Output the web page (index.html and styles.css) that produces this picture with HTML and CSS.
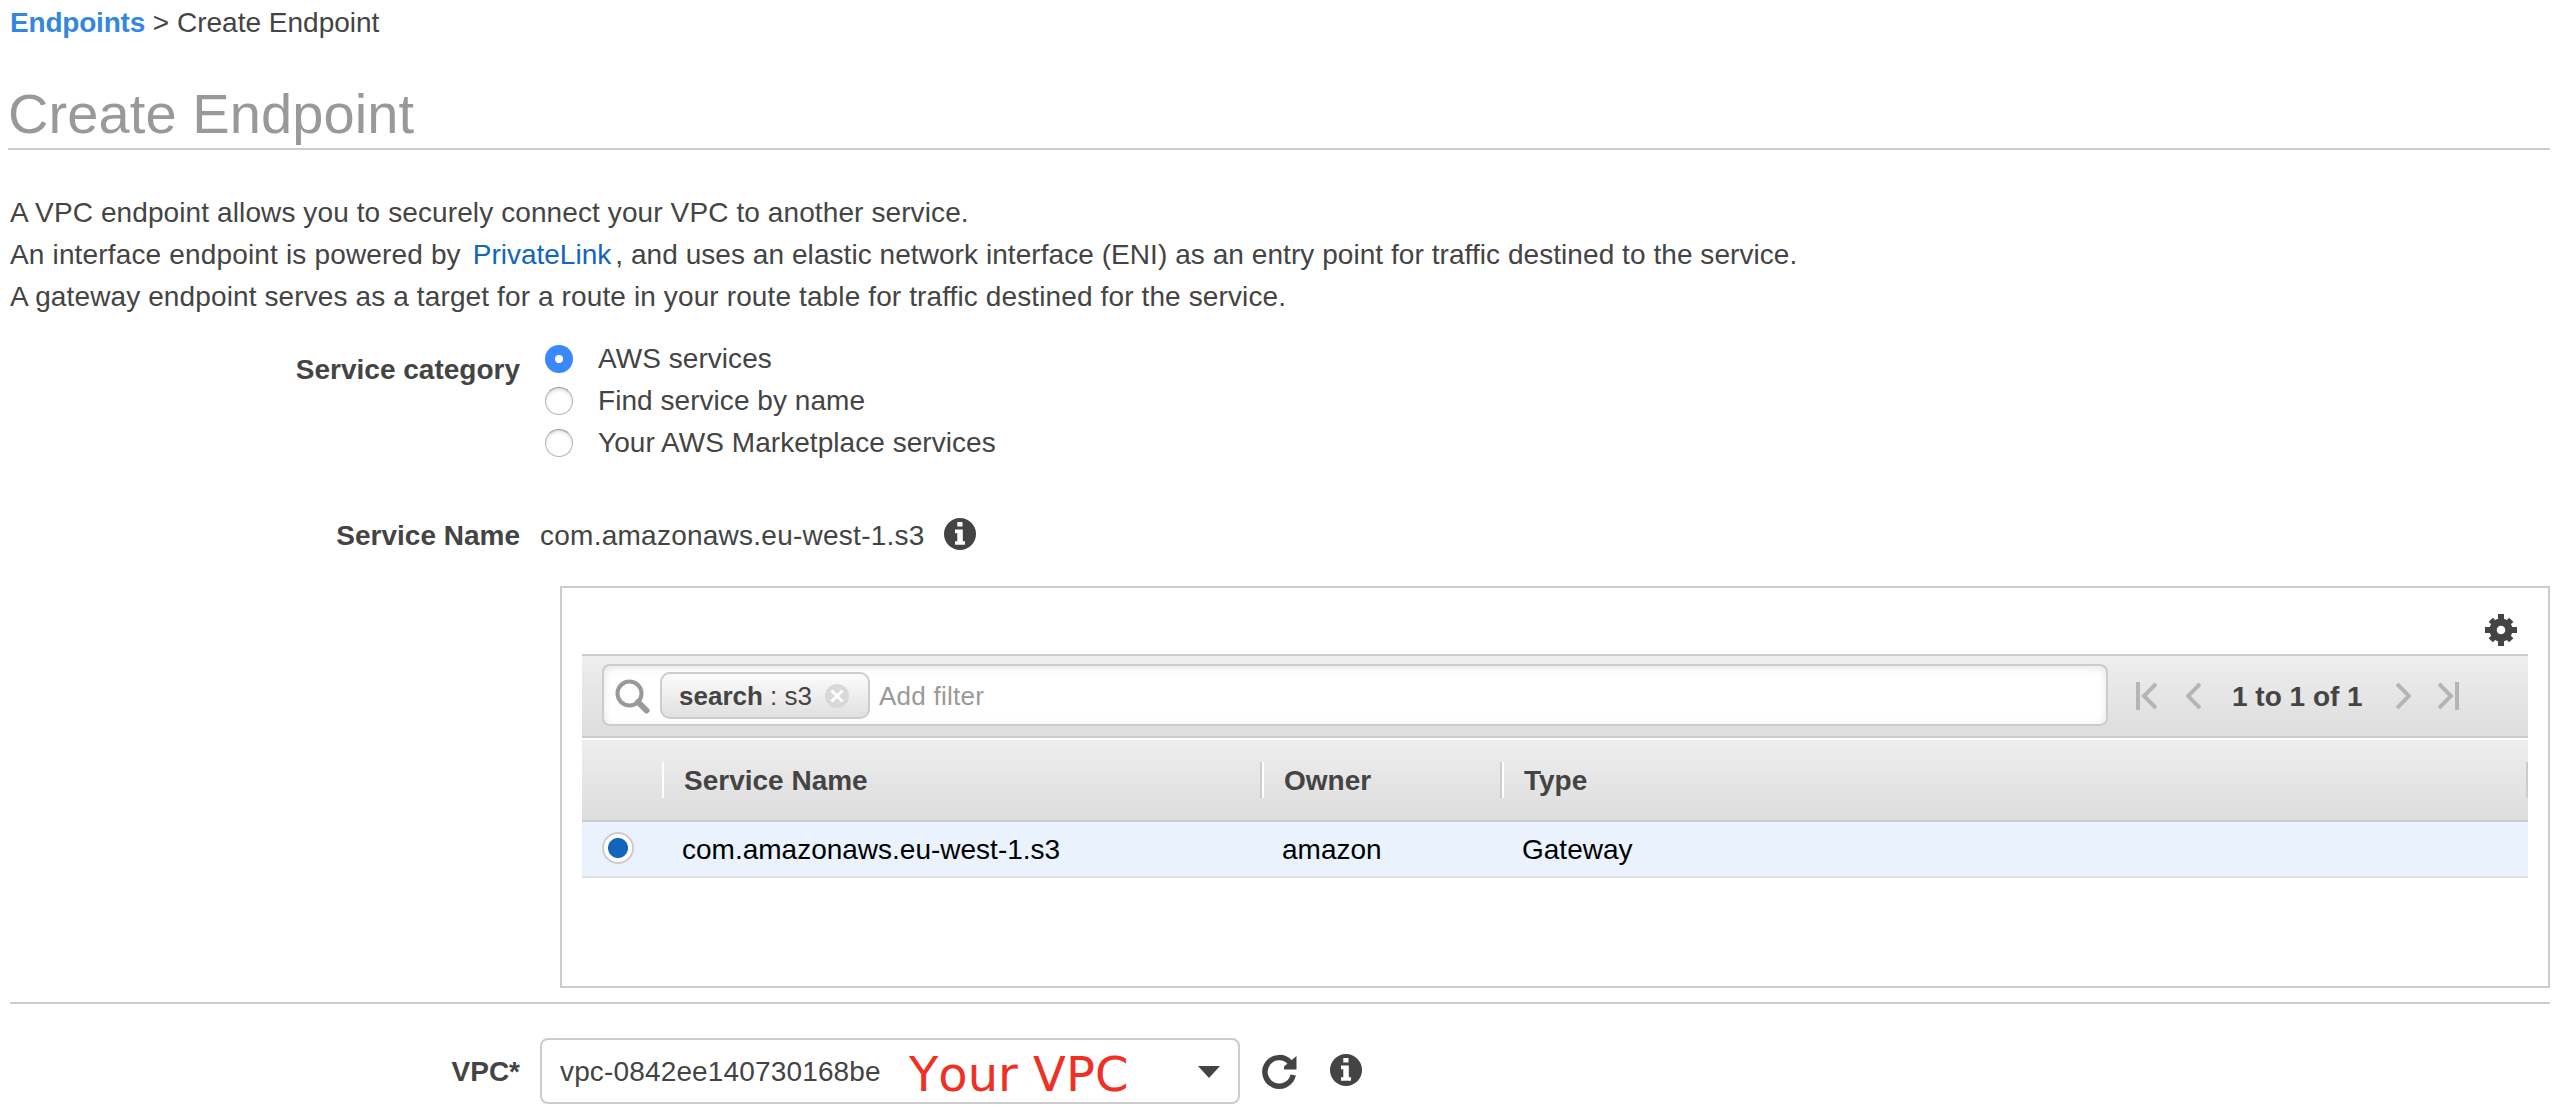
FILE: index.html
```html
<!DOCTYPE html>
<html lang="en">
<head>
<meta charset="utf-8">
<title>Create Endpoint</title>
<link rel="stylesheet" href="styles.css">
</head>
<body>
<nav class="crumbs"><a href="#">Endpoints</a> &gt; <span class="here">Create Endpoint</span></nav>
<h1>Create Endpoint</h1>
<div class="intro">
  <p class="i1">A VPC endpoint allows you to securely connect your VPC to another service.</p>
  <p class="i2"><span class="lead">An interface endpoint is powered by </span><a href="#">PrivateLink</a>, and uses an elastic network interface (ENI) as an entry point for traffic destined to the service.</p>
  <p class="i3">A gateway endpoint serves as a target for a route in your route table for traffic destined for the service.</p>
</div>
<div class="row category">
  <div class="label">Service category</div>
  <div class="options">
    <label class="option"><span class="radio on"></span><span>AWS services</span></label>
    <label class="option"><span class="radio"></span><span>Find service by name</span></label>
    <label class="option"><span class="radio"></span><span>Your AWS Marketplace services</span></label>
  </div>
</div>
<div class="row name">
  <div class="label">Service Name</div>
  <div class="value">com.amazonaws.eu-west-1.s3</div>
  <svg class="info" viewBox="0 0 32 32"><circle cx="16" cy="16" r="16" fill="#444"/><path d="M13.300 4h5.200v4.500h-5.200zM11 11.500h7.800v11.800h2.200v3.500H11v-3.500h2.300v-8H11z" fill="#fff"/></svg>
</div>
<section class="panel">
  <div class="tools">
    <svg class="gear" viewBox="0 0 32 32"><g fill="#444"><circle cx="16" cy="16" r="11.500"/><path d="M13 0h6v32h-6zM0 13h32v6H0z"/><path d="M13 1.500h6v29h-6zM1.500 13h29v6h-29z" transform="rotate(45 16 16)"/></g><circle cx="16" cy="16" r="4.300" fill="#fff"/></svg>
  </div>
  <div class="toolbar">
    <div class="search">
      <svg class="lens" viewBox="0 0 36 36"><circle cx="14.500" cy="14.500" r="12" fill="none" stroke="#999" stroke-width="4"/><path d="M23 23l8.500 8.500" stroke="#999" stroke-width="6" stroke-linecap="round"/></svg>
      <div class="chip"><b>search</b>&nbsp;: s3<svg class="clear" viewBox="0 0 24 24"><circle cx="12" cy="12" r="12" fill="#d8d8d8"/><path d="M6.500 6.500l11 11M17.500 6.500l-11 11" stroke="#fff" stroke-width="3"/></svg></div>
      <span class="hint">Add filter</span>
    </div>
    <div class="pager">
      <svg class="p1" viewBox="0 0 21 28"><path d="M2 0v28M20 2L8 14l12 12" /></svg>
      <svg class="p2" viewBox="0 0 15 28"><path d="M14 2L2 14l12 12"/></svg>
      <b>1 to 1 of 1</b>
      <svg class="p3" viewBox="0 0 15 28"><path d="M1 2l12 12L1 26"/></svg>
      <svg class="p4" viewBox="0 0 21 28"><path d="M19 0v28M1 2l12 12L1 26"/></svg>
    </div>
  </div>
  <div class="thead">
    <div class="th pick"></div><div class="th">Service Name</div><div class="th">Owner</div><div class="th">Type</div>
  </div>
  <div class="trow">
    <div class="td"><span class="dot"></span></div><div class="td">com.amazonaws.eu-west-1.s3</div><div class="td">amazon</div><div class="td">Gateway</div>
  </div>
</section>
<hr>
<div class="row vpc">
  <div class="label">VPC*</div>
  <div class="select"><span class="id">vpc-0842ee140730168be</span><span class="note">Your VPC</span><span class="caret"></span></div>
  <svg class="refresh" viewBox="0 0 36 36"><path d="M28 8.500A14.300 14.300 0 1 0 31.200 21" fill="none" stroke="#444" stroke-width="5.500"/><path d="M34.500 2v13.500H22v-3z" fill="#444"/></svg>
  <svg class="info" viewBox="0 0 32 32"><circle cx="16" cy="16" r="16" fill="#444"/><path d="M13.300 4h5.200v4.500h-5.200zM11 11.500h7.800v11.800h2.200v3.500H11v-3.500h2.300v-8H11z" fill="#fff"/></svg>
</div>
</body>
</html>
```
FILE: styles.css
```css
* { box-sizing: border-box; }
body {
  margin: 0;
  padding: 0 20px 0 8px;
  height: 1118px;
  overflow: hidden;
  background: #fff;
  color: #444;
  font: 28px/42px "Liberation Sans", Arial, sans-serif;
  white-space: nowrap;
}
a { color: #1166bb; text-decoration: none; }
svg { display: block; flex: none; }
.crumbs { height: 74px; padding: 2px 0 0 2px; }
.crumbs a { color: #3388dd; font-weight: bold; letter-spacing: -.2px; }
h1 {
  margin: 0;
  height: 76px;
  border-bottom: 2px solid #ccc;
  color: #999;
  font-size: 56px;
  font-weight: normal;
  line-height: 80px;
  letter-spacing: .1px;
}
.intro { padding: 42px 0 0 2px; height: 191px; }
.intro p { margin: 0; }
.intro a { margin: 0 4px; letter-spacing: 0; }
.i1 { letter-spacing: .105px; }
.i2 { letter-spacing: .06px; }
.i2 .lead { letter-spacing: .16px; }
.i3 { letter-spacing: .12px; }
.row { display: flex; }
.label { width: 512px; text-align: right; font-weight: bold; flex: none; }
.category { height: 167px; }
.category .label { padding-top: 8px; }
.options { padding: 0 0 0 25px; margin-top: -3px; }
.option { display: flex; align-items: center; height: 42px; gap: 25px; letter-spacing: .05px; }
.radio { width: 28px; height: 28px; border-radius: 50%; border: 1.5px solid #b5b5b5; border-top-color: #999; box-shadow: inset 0 2px 3px #ddd; }
.radio.on { border: 0; background: radial-gradient(circle, #fff 3.700px, #3b88fd 4.500px); box-shadow: none; }
.name { height: 78px; padding-top: 7px; }
.name .value { margin-left: 20px; width: 404px; letter-spacing: .25px; }
.name .info { margin-top: 3px; }
.info { width: 32px; height: 32px; }
.panel { margin-left: 552px; height: 402px; border: 2px solid #ccc; padding: 0 20px; }
.tools { height: 66px; padding: 26px 11px 0 0; display: flex; justify-content: flex-end; }
.gear { width: 32px; height: 32px; }
.toolbar {
  height: 84px;
  border-top: 2px solid #ccc;
  border-bottom: 2px solid #ccc;
  background: linear-gradient(#eee, #ddd);
  padding: 8px 0 0 20px;
  display: flex;
}
.search {
  width: 1506px;
  height: 62px;
  border: 2px solid #ccc;
  border-radius: 8px;
  background: #fff;
  box-shadow: inset 0 2px 8px #e4e4e4;
  padding: 6px 11px;
  display: flex;
  font-size: 26px;
}
.lens { width: 36px; height: 36px; margin: 7px 9px 0 0; }
.chip {
  width: 210px;
  height: 47px;
  border: 2px solid #ccc;
  border-radius: 10px;
  background: linear-gradient(#fcfcfc, #e0e0e0);
  padding: 1px 0 0 17px;
  display: flex;
}
.clear { width: 24px; height: 24px; margin: 9px 0 0 13px; }
.hint { color: #999; margin: 3px 0 0 9px; letter-spacing: .25px; }
.pager { display: flex; padding: 12px 0 0 28px; }
.pager b { width: 164px; margin: 0 0 0 -1px; }
.pager svg { height: 28px; margin-top: 6px; fill: none; stroke: #b5b5b5; stroke-width: 4; }
.p1, .p4 { width: 21px; }
.p2, .p3 { width: 15px; }
.pager .p2 { margin: 6px 32px 0 29px; }
.pager .p4 { margin-left: 27px; }
.thead {
  margin-top: 2px;
  height: 82px;
  border-bottom: 2px solid #ccc;
  background: linear-gradient(#eee, #ddd);
  display: grid;
  grid-template-columns: 80px 600px 240px 1fr;
  align-items: center;
  font-weight: bold;
}
.th { height: 36px; line-height: 38px; padding-left: 20px; border-left: 2px solid #fff; border-right: 2px solid #ccc; }
.th.pick { border-left: 0; border-right-color: transparent; }
.trow {
  height: 56px;
  border-bottom: 2px solid #dde0e5;
  background: #eaf2fe;
  color: #000;
  display: grid;
  grid-template-columns: 80px 600px 240px 1fr;
}
.td { padding: 7px 0 0 20px; }
.dot { display: block; margin-top: 3px; width: 32px; height: 32px; border: 2px solid #ccc; border-radius: 50%; background: radial-gradient(circle, #1166bb 9.5px, #fff 10.5px); }
hr { margin: 14px 0 34px 2px; border: 0; height: 2px; background: #ccc; }
.vpc .label { padding-top: 13px; }
.select {
  margin-left: 20px;
  width: 700px;
  height: 66px;
  border: 2px solid #ccc;
  border-radius: 8px;
  padding-left: 18px;
  display: flex;
}
.id { padding-top: 11px; width: 349px; letter-spacing: .15px; }
.note { color: #ee3124; font: 48px/56px "DejaVu Sans", sans-serif; font-kerning: none; width: 289px; padding-top: 6px; }
.caret { margin-top: 26px; width: 22px; height: 12px; background: #444; clip-path: polygon(0 0, 100% 0, 50% 100%); }
.refresh { width: 36px; height: 36px; margin: 16px 32px 0 22px; }
.vpc .info { margin-top: 16px; }
```
